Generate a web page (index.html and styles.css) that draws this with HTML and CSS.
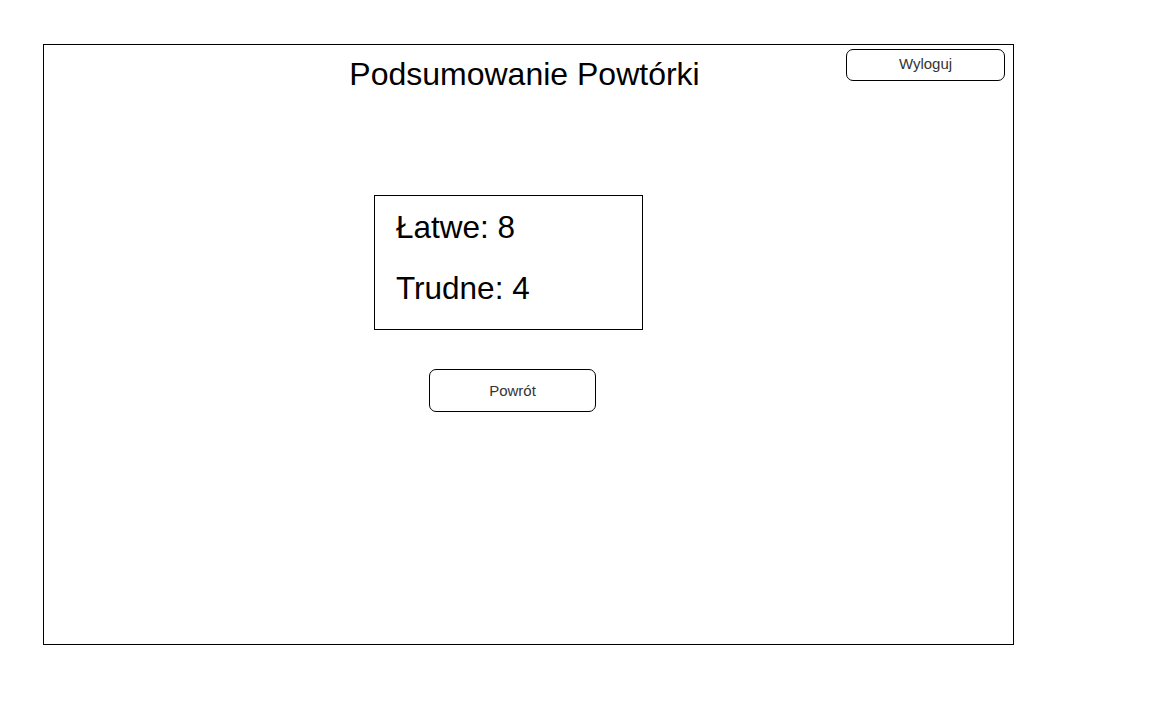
FILE: index.html
```html
<!DOCTYPE html>
<html lang="pl">
<head>
<meta charset="utf-8">
<title>Podsumowanie Powtórki</title>
<link rel="stylesheet" href="styles.css">
</head>
<body>
<main class="frame">
  <header class="header">
    <div class="spacer"></div>
    <h1 class="title">Podsumowanie Powtórki</h1>
    <div class="header-right">
      <button class="btn btn-logout" type="button">Wyloguj</button>
    </div>
  </header>
  <section class="content">
    <div class="summary">
      <p class="stat">Łatwe: 8</p>
      <p class="stat">Trudne: 4</p>
    </div>
    <button class="btn btn-back" type="button">Powrót</button>
  </section>
</main>
</body>
</html>
```

FILE: styles.css
```css
html, body {
  margin: 0;
  padding: 0;
  background: #ffffff;
}

body {
  font-family: "Liberation Sans", Arial, sans-serif;
  color: #000000;
  padding: 44px 0 0 43px;
}

.frame {
  box-sizing: border-box;
  width: 971px;
  height: 601px;
  border: 1px solid #000000;
}

.header {
  display: grid;
  grid-template-columns: 1fr auto 1fr;
  align-items: start;
  padding: 4px 8px 0 0;
}

.title {
  margin: 7px 0 0 0;
  font-size: 32px;
  font-weight: normal;
  line-height: 36px;
  white-space: nowrap;
}

.header-right {
  display: flex;
  justify-content: flex-end;
}

.btn {
  box-sizing: border-box;
  background: #ffffff;
  border: 1px solid #000000;
  border-radius: 7px;
  font-family: "Liberation Sans", Arial, sans-serif;
  font-size: 15px;
  color: #333333;
  padding: 0;
  cursor: pointer;
}

.btn-logout {
  width: 159px;
  height: 32px;
  line-height: 27px;
  padding-bottom: 3px;
}

.content {
  display: flex;
  flex-direction: column;
  align-items: flex-start;
  margin: 103px 0 0 330px;
}

.summary {
  box-sizing: border-box;
  width: 269px;
  height: 135px;
  border: 1px solid #000000;
  padding: 13px 0 0 21px;
  display: flex;
  flex-direction: column;
  gap: 25px;
}

.stat {
  margin: 0;
  font-size: 31.5px;
  line-height: 36px;
}

.btn-back {
  margin: 39px 0 0 55px;
  width: 167px;
  height: 43px;
}
```
